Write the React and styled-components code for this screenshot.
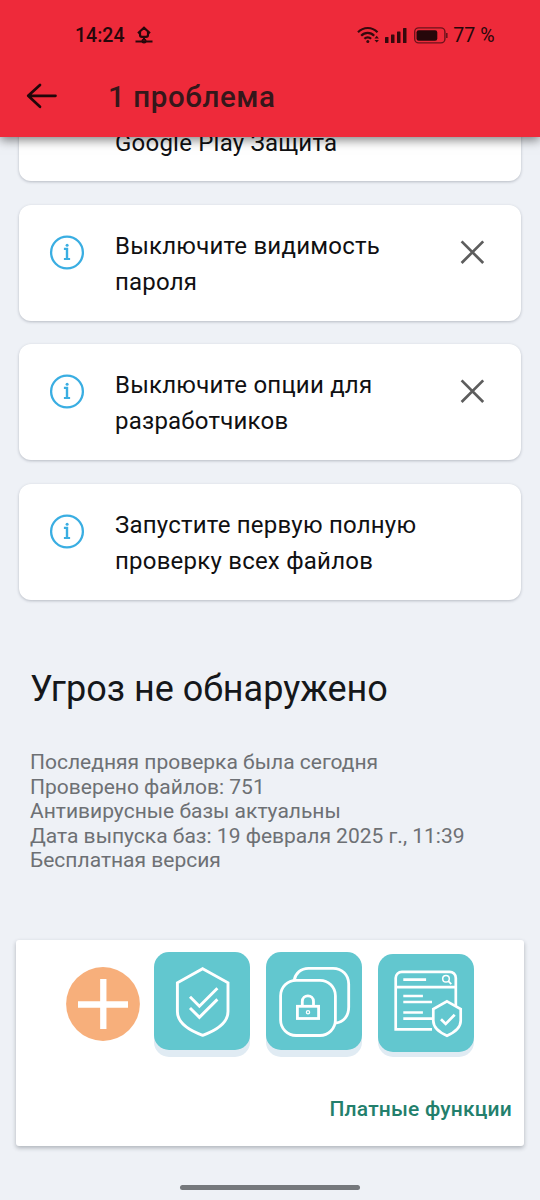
import React from 'react';

import styled, { createGlobalStyle } from 'styled-components';

const GlobalStyle = createGlobalStyle`
  * {
    box-sizing: border-box;
  }

  body {
    margin: 0;
    background: #eef1f6;
    font-family: Roboto, 'Noto Sans', sans-serif;
  }

  svg {
    flex: none;
  }

  p,
  h1,
  h2 {
    margin: 0;
  }
`;

const Screen = styled.div`
  width: 540px;
  height: 1200px;
  display: flex;
  flex-direction: column;
  overflow: hidden;
  background: #eef1f6;
`;

const Header = styled.header`
  position: relative;
  z-index: 1;
  flex: none;
  height: 137px;
  background: #ee2a3a;
  box-shadow: 0 3px 10px rgba(0, 0, 0, 0.5);
`;

const StatusBar = styled.div`
  height: 70px;
  display: flex;
  align-items: center;
  justify-content: space-between;
  padding: 0 45.5px 0 75px;
`;

const StatusGroup = styled.div`
  display: flex;
  align-items: center;
  gap: ${(props) => props.$gap};
`;

const StatusText = styled.span`
  padding-top: 2px;
  font-size: ${(props) => props.$size};
  line-height: 24px;
  font-weight: ${(props) => props.$weight};
  color: #26070a;
`;

const AppBar = styled.div`
  height: 54px;
  display: flex;
  align-items: center;
  gap: 49px;
  padding-left: 25px;
`;

const IconButton = styled.button`
  display: flex;
  padding: 0;
  border: none;
  background: none;
  cursor: pointer;
`;

const Title = styled.h1`
  font-size: 29.5px;
  line-height: 36px;
  font-weight: 500;
  letter-spacing: 0.6px;
  color: #35171a;
`;

const Content = styled.main`
  flex: none;
  display: flex;
  flex-direction: column;
`;

const IssueList = styled.div`
  display: flex;
  flex-direction: column;
  gap: 23.5px;
  margin-top: -15px;
  padding: 0 19px;
`;

const IssueCard = styled.div`
  height: ${(props) => (props.$clipped ? '59px' : '116px')};
  display: flex;
  align-items: flex-start;
  padding: ${(props) => (props.$clipped ? '3px 35px 0 96px' : '23px 36px 0 30px')};
  border-radius: 12px;
  background: #fff;
  box-shadow: 0 1px 3px rgba(40, 50, 70, 0.28);

  .info {
    margin: 6px 30px 0 0;
  }
`;

const IssueText = styled.p`
  flex: 1;
  font-size: 24px;
  line-height: 36px;
  letter-spacing: 0.22px;
  white-space: pre-line;
  color: #101012;
`;

const CloseButton = styled(IconButton)`
  margin-top: 11px;
`;

const Heading = styled.h2`
  margin: 66px 0 0 30px;
  font-size: 36px;
  line-height: 46px;
  font-weight: 400;
  color: #15171a;
`;

const Summary = styled.div`
  margin: 38.5px 0 0 30px;
  font-size: 21px;
  line-height: 24.5px;
  color: #6d7074;
`;

const PromoCard = styled.section`
  height: 206.5px;
  margin: 67px 16px 0;
  border-radius: 3px;
  background: #fff;
  box-shadow: 0 2px 4px rgba(40, 50, 60, 0.32);
`;

const Features = styled.div`
  height: 118px;
  display: flex;
  align-items: flex-start;
  padding: 12.5px 0 0 50px;

  .plus {
    margin: 14.5px 14px 0 0;
  }
`;

const Tile = styled.div`
  flex: none;
  width: 96px;
  height: 98px;
  margin: ${(props) => (props.$low ? '1.5px 0 0 -1px' : '0 16.3px 0 0')};
  border-radius: 15px;
  background: #62c7cf;
  box-shadow: 0 ${(props) => (props.$low ? '5px' : '7px')} 0 #e0ebf3;
`;

const PaidLink = styled.button`
  display: block;
  margin: 38.5px 12px 0 auto;
  padding: 0;
  border: none;
  background: none;
  font-family: inherit;
  font-size: 21px;
  line-height: 26px;
  font-weight: 500;
  letter-spacing: 0.2px;
  color: #237f6c;
  cursor: pointer;
`;

const HomeIndicator = styled.div`
  flex: none;
  width: 180px;
  height: 4.5px;
  margin: 39px auto 0;
  border-radius: 3px;
  background: #75787c;
`;

const CloudIcon = () => (
  <svg width="18" height="18" viewBox="0 0 18 18" fill="none" stroke="#26070a">
    <path d="M3 7.2 9 1.8l6 5.4M5 6v3c0 1.2.8 1.8 2 1.8h4c1.2 0 2-.6 2-1.8V6" strokeWidth="2.2" />
    <path d="M9 10.5v3M.5 15.4h17" strokeWidth="2" />
    <circle cx="9" cy="15" r="1.6" strokeWidth="1.8" />
  </svg>
);

const WifiIcon = () => (
  <svg width="23" height="18" viewBox="0 0 23 18" fill="none" stroke="#35090d" strokeWidth="2.2">
    <path d="M1 6.2c5.5-5.6 14-5.6 19.5 0M4.2 9.7c3.6-3.8 9.4-3.8 13 0M7.4 12.8c1.9-1.9 4.8-1.9 6.7 0" />
    <circle cx="10.8" cy="15.6" r="1.5" fill="#35090d" stroke="none" />
    <path d="m17.5 12.4 2.2-2.6 2.2 2.6zM17.5 13.9l2.2 2.6 2.2-2.6z" fill="#35090d" stroke="none" />
  </svg>
);

const SignalIcon = () => (
  <svg width="24" height="17" viewBox="0 0 24 17" fill="#35090d">
    <rect x="0" y="10" width="3.5" height="6" rx="0.6" />
    <rect x="6" y="7.5" width="3.5" height="8.5" rx="0.6" />
    <rect x="12" y="4.5" width="3.5" height="11.5" rx="0.6" />
    <rect x="18" y="1" width="3.5" height="15" rx="0.6" />
  </svg>
);

const BatteryIcon = () => (
  <svg width="34" height="17" viewBox="0 0 34 17" fill="none">
    <rect x="0.7" y="0.9" width="30.2" height="15" rx="4" stroke="#6c131b" strokeWidth="1.4" />
    <rect x="2.5" y="3.2" width="20.8" height="10.6" rx="2.2" fill="#26070a" />
    <path d="M32.8 6v5" stroke="#6c131b" strokeWidth="1.6" />
  </svg>
);

const BackIcon = () => (
  <svg width="34" height="28" viewBox="0 0 34 28" fill="none" stroke="#210609" strokeWidth="2.7" strokeLinecap="round" strokeLinejoin="round">
    <path d="M30.5 12.8H3.2M15 2 3.2 12.8 15 23.8" />
  </svg>
);

const InfoIcon = () => (
  <svg className="info" width="36" height="36" viewBox="0 0 36 36" fill="none" stroke="#3aaee2">
    <circle cx="18" cy="18.5" r="15.9" strokeWidth="2.3" />
    <path d="M14.9 14.9h4.2M18 14v10.5" strokeWidth="2.4" />
    <path d="M14.9 25h6.2" strokeWidth="2" />
    <circle cx="18.1" cy="11.3" r="1.5" fill="#3aaee2" stroke="none" />
  </svg>
);

const CloseIcon = () => (
  <svg width="26" height="26" viewBox="0 0 26 26" stroke="#5d5d5d" strokeWidth="2.7">
    <path d="m2.6 2.4 21.6 21.6M24.2 2.4 2.6 24" />
  </svg>
);

const PlusIcon = () => (
  <svg className="plus" width="74" height="74" viewBox="0 0 74 74">
    <circle cx="37" cy="37" r="36.9" fill="#f7af7b" />
    <path d="M37.3 12v50M12 37.5h50" stroke="#fff" strokeWidth="6.3" />
  </svg>
);

const ShieldIcon = () => (
  <svg width="96" height="98" viewBox="0 0 96 98" fill="none" stroke="#fff" strokeWidth="2.9">
    <path d="M48.7 16.7 74 30.8v28.7c0 11-9.3 18-25.3 23.8-16-5.8-25.3-12.8-25.3-23.8V30.8z" />
    <path d="m36 44.8 9.4 9.4 18-18M36 56l9.4 9.4 18-18" />
  </svg>
);

const LockIcon = () => (
  <svg width="96" height="98" viewBox="0 0 96 98" fill="none" stroke="#fff" strokeWidth="2.8">
    <rect x="14.6" y="28.3" width="54.8" height="55.2" rx="15.5" />
    <path d="M28.2 28.3c1.2-7 6.8-12 14.2-12H67c9 0 15.7 6.7 15.7 15.7V55c0 9-5.2 15.5-13 16" />
    <rect x="31.4" y="54.3" width="21.2" height="12.2" strokeWidth="2.8" />
    <path d="M36.3 54v-4.5c0-7.5 11.2-7.5 11.2 0V54" />
    <circle cx="42" cy="60.2" r="1.6" strokeWidth="1.3" />
  </svg>
);

const BrowserIcon = () => (
  <svg width="96" height="98" viewBox="0 0 96 98" fill="none" stroke="#fff" strokeWidth="2.7">
    <path d="M54 75.3H17.7V24c0-3.5 2.8-6.2 6.2-6.2h47.6c3.5 0 6.3 2.7 6.3 6.2v28M17.7 33.2h60" />
    <path d="M25.3 25.6h22.8M25.3 42h19.6M25.3 48h28.7M25.3 58.5h19.6M25.3 64.7H54" />
    <circle cx="68" cy="24.8" r="3.3" strokeWidth="1.5" />
    <path d="m70.3 27.2 3 3" strokeWidth="1.8" />
    <path d="M69 47.4 82.7 55v11.7c0 6.6-5.8 11.5-13.7 15-7.9-3.5-13.7-8.4-13.7-15V55z" fill="#62c7cf" />
    <path d="m63 65.2 4.7 4.7 9-9.2" />
  </svg>
);

const issues = [
  { text: 'Выключите видимость\nпароля', closable: true },
  { text: 'Выключите опции для\nразработчиков', closable: true },
  { text: 'Запустите первую полную\nпроверку всех файлов' },
];

const summary = [
  'Последняя проверка была сегодня',
  'Проверено файлов: 751',
  'Антивирусные базы актуальны',
  'Дата выпуска баз: 19 февраля 2025 г., 11:39',
  'Бесплатная версия',
];

const Issue = ({ issue }) => (
  <IssueCard>
    <InfoIcon />
    <IssueText>{issue.text}</IssueText>
    {issue.closable && (
      <CloseButton>
        <CloseIcon />
      </CloseButton>
    )}
  </IssueCard>
);

const App = () => {
  return (
    <Screen>
      <GlobalStyle />
      <Header>
        <StatusBar>
          <StatusGroup $gap="11px">
            <StatusText $weight={500} $size="19.5px">
              14:24
            </StatusText>
            <CloudIcon />
          </StatusGroup>
          <StatusGroup $gap="5px">
            <WifiIcon />
            <SignalIcon />
            <BatteryIcon />
            <StatusText $weight={400} $size="19.6px">
              77 %
            </StatusText>
          </StatusGroup>
        </StatusBar>
        <AppBar>
          <IconButton>
            <BackIcon />
          </IconButton>
          <Title>1 проблема</Title>
        </AppBar>
      </Header>
      <Content>
        <IssueList>
          {/* scrolled under the header, only its last line is left */}
          <IssueCard $clipped>
            <IssueText>Google Play Защита</IssueText>
          </IssueCard>
          {issues.map((issue) => (
            <Issue key={issue.text} issue={issue} />
          ))}
        </IssueList>
        <Heading>Угроз не обнаружено</Heading>
        <Summary>
          {summary.map((line) => (
            <p key={line}>{line}</p>
          ))}
        </Summary>
        <PromoCard>
          <Features>
            <PlusIcon />
            <Tile>
              <ShieldIcon />
            </Tile>
            <Tile>
              <LockIcon />
            </Tile>
            <Tile $low>
              <BrowserIcon />
            </Tile>
          </Features>
          <PaidLink>Платные функции</PaidLink>
        </PromoCard>
      </Content>
      <HomeIndicator />
    </Screen>
  );
};

export default App;
